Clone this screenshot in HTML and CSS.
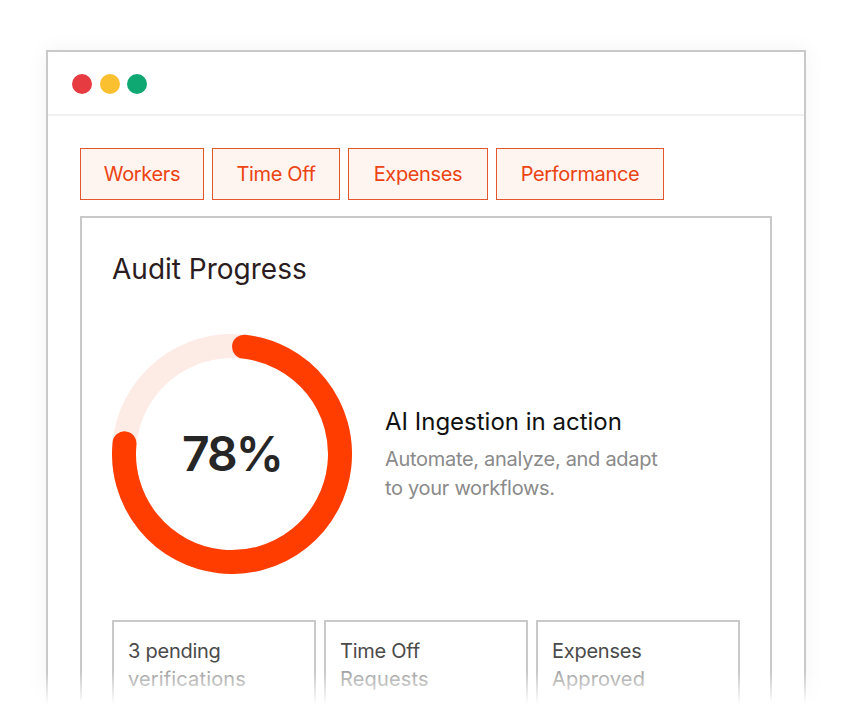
FILE: index.html
```html
<!DOCTYPE html>
<html>
<head>
    <title>Audit Progress</title>
    <link rel="stylesheet" href="styles.css">
</head>
<body>
    <div class="window">
        <div class="titlebar">
            <span class="dot dot-red"></span>
            <span class="dot dot-yellow"></span>
            <span class="dot dot-green"></span>
        </div>
        <div class="content">
            <div class="tabs">
                <div class="tab">Workers</div>
                <div class="tab">Time Off</div>
                <div class="tab">Expenses</div>
                <div class="tab">Performance</div>
            </div>
            <div class="panel">
                <h2>Audit Progress</h2>
                <div class="progress">
                    <div class="ring">
                        <svg width="240" height="240" viewBox="0 0 240 240">
                            <circle class="ring-track" cx="120" cy="120" r="108"></circle>
                            <circle class="ring-value" cx="120" cy="120" r="108" transform="rotate(-83.6 120 120)"></circle>
                        </svg>
                        <div class="ring-label">78%</div>
                    </div>
                    <div class="progress-text">
                        <h3>AI Ingestion in action</h3>
                        <p>Automate, analyze, and adapt<br>to your workflows.</p>
                    </div>
                </div>
                <div class="stats">
                    <div class="stat"><b>3 pending</b><span>verifications</span></div>
                    <div class="stat"><b>Time Off</b><span>Requests</span></div>
                    <div class="stat"><b>Expenses</b><span>Approved</span></div>
                </div>
            </div>
        </div>
    </div>
    <div class="fade"></div>
</body>
</html>
```

FILE: styles.css
```css
html, body {
    height: 728px;
}
body {
    margin: 0;
    background: #fff;
    color: #2a1c20;
    font-family: Inter, "Liberation Sans", sans-serif;
    overflow: hidden;
    position: relative;
}
.window {
    width: 760px;
    height: 678px;
    box-sizing: border-box;
    margin: 50px 0 0 46px;
    border: 2px solid #c9c9c9;
    border-bottom: none;
    background: #fff;
    box-shadow: 0 0 20px rgba(0, 0, 0, 0.05);
}
.titlebar {
    height: 64px;
    box-sizing: border-box;
    display: flex;
    align-items: center;
    gap: 7.5px;
    padding: 2px 0 0 24px;
    border-bottom: 2px solid #f0f0f0;
}
.dot {
    width: 20px;
    height: 20px;
    border-radius: 50%;
}
.dot-red { background: #e63c41; }
.dot-yellow { background: #fbc02f; }
.dot-green { background: #10a872; }
.content {
    padding: 32px 32px 0;
}
.tabs {
    display: grid;
    grid-template-columns: 124px 128px 140px 168px;
    gap: 8px;
}
.tab {
    height: 52px;
    box-sizing: border-box;
    display: flex;
    align-items: center;
    justify-content: center;
    border: 1px solid #e2572b;
    background: #fef4f0;
    color: #ec4312;
    font-size: 20px;
    letter-spacing: -0.35px;
}
.panel {
    margin-top: 16px;
    height: 484px;
    box-sizing: border-box;
    border: 2px solid #c9c9c9;
    border-bottom: none;
    padding: 30px 30px 0;
}
h2 {
    margin: 0;
    font-size: 28px;
    line-height: 42px;
    font-weight: 400;
}
.progress {
    margin-top: 44px;
    display: flex;
    align-items: center;
    gap: 33px;
}
.ring {
    position: relative;
    width: 240px;
    height: 240px;
}
.ring svg {
    display: block;
}
.ring-track, .ring-value {
    fill: none;
    stroke-width: 24;
}
.ring-track {
    stroke: #fdebe6;
}
.ring-value {
    stroke: #ff3d00;
    stroke-linecap: round;
    stroke-dasharray: 507 679;
}
.ring-label {
    position: absolute;
    inset: 0 0 2px 0;
    display: flex;
    align-items: center;
    justify-content: center;
    font-size: 48px;
    font-weight: 600;
    letter-spacing: -2px;
    color: #262626;
}
.progress-text h3 {
    margin: 0 0 7px;
    font-size: 24px;
    line-height: 32px;
    font-weight: 400;
    color: #111;
}
.progress-text p {
    margin: 0;
    font-size: 20px;
    line-height: 29px;
    letter-spacing: -0.3px;
    color: #8a8a8a;
}
.stats {
    margin-top: 46px;
    display: flex;
    gap: 8px;
}
.stat {
    width: 204px;
    height: 120px;
    box-sizing: border-box;
    border: 2px solid #c9c9c9;
    padding: 15px 14px 0;
    font-size: 20px;
    line-height: 28px;
}
.stat b {
    display: block;
    font-weight: 400;
    color: #4a4a4a;
    letter-spacing: -0.25px;
}
.stat span {
    color: #a3a3a3;
    letter-spacing: 0.15px;
}
.fade {
    position: absolute;
    left: 0;
    right: 0;
    top: 672px;
    height: 56px;
    background: linear-gradient(to bottom, rgba(255, 255, 255, 0) 0%, #fff 58%);
}
```
